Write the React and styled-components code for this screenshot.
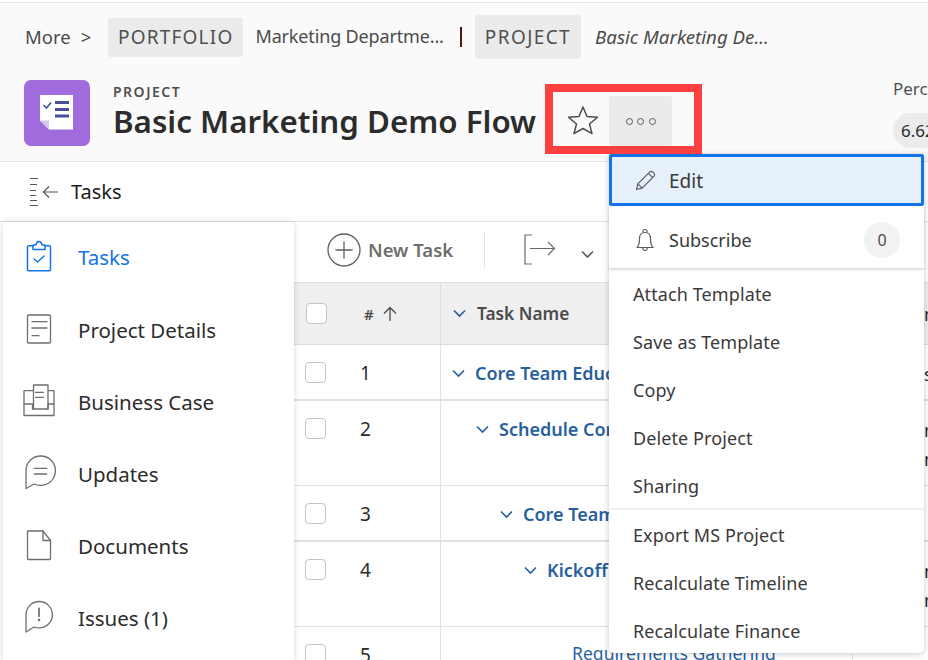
import styled, { createGlobalStyle } from "styled-components";

const menuGroup = ["Attach Template", "Save as Template", "Copy", "Delete Project", "Sharing"];
const menuGroup2 = ["Export MS Project", "Recalculate Timeline", "Recalculate Finance"];

const rows = [
  { n: 1, h: 56, level: 0, name: "Core Team Education", thick: true, right: "s" },
  { n: 2, h: 85, level: 1, name: "Schedule Core Team", right: "two" },
  { n: 3, h: 56, level: 2, name: "Core Team Training", thick: true },
  { n: 4, h: 85, level: 3, name: "Kickoff Meeting", right: "two" },
];

const Global = createGlobalStyle`
  html, body { margin: 0; padding: 0; background: #fff; }
  body { font-family: "Noto Sans", "Open Sans", sans-serif; color: #2c2c2c; }
`;

function NavSvg({ color = "#6e6e6e", sw = 1.3, children }) {
  return (
    <svg width="32" height="32" viewBox="0 0 32 32" fill="none" stroke={color} strokeWidth={sw} strokeLinecap="round" strokeLinejoin="round" style={{ overflow: "visible" }}>
      {children}
    </svg>
  );
}

function Chevron({ color = "#2a5f9e" }) {
  return (
    <svg width="13" height="9" viewBox="0 0 13 9" fill="none" stroke={color} strokeWidth="1.7">
      <path d="M1 1.5 L6.5 7 L12 1.5" />
    </svg>
  );
}

export default function App() {
  return (
    <Page>
      <Global />
      <Header>
        <Crumbs>
          <More>More<MoreArrow>&gt;</MoreArrow></More>
          <Tag>PORTFOLIO</Tag>
          <CrumbText>Marketing Departme...</CrumbText>
          <CrumbSep />
          <Tag $big>PROJECT</Tag>
          <CrumbText $italic>Basic Marketing De...</CrumbText>
        </Crumbs>
        <TitleRow>
          <Logo>
            <svg width="34" height="36" viewBox="0 0 34 36">
              <path d="M0 0 H33 V34.5 H9 L0 25.5 Z" fill="#fff" />
              <path d="M0 25.5 H9 V34.5 Z" fill="#d9c6ee" />
              <path d="M3.5 10 L6.5 13 L11 7.5" fill="none" stroke="#4a4f9c" strokeWidth="1.6" />
              <path d="M15 7.5 H29 M15 14.5 H29 M15 21 H29" stroke="#4a4f9c" strokeWidth="2.8" />
            </svg>
          </Logo>
          <TitleBlock>
            <Kicker>PROJECT</Kicker>
            <Title>Basic Marketing Demo Flow</Title>
          </TitleBlock>
          <StarWrap>
            <svg width="32" height="30" viewBox="0 0 32 30" fill="none" stroke="#4b4b4b" strokeWidth="1.5" strokeLinejoin="round">
              <path d="M16 2 L20 11.5 L30.5 12.3 L22.5 19 L25 28.6 L16 23.5 L7 28.6 L9.5 19 L1.5 12.3 L12 11.5 Z" />
            </svg>
          </StarWrap>
          <DotsButton>
            <Dot /><Dot /><Dot />
          </DotsButton>
          <Percent>
            <PercentLabel>Percent Complete</PercentLabel>
            <PercentPill>6.62%</PercentPill>
          </Percent>
        </TitleRow>
      </Header>

      <TasksBar>
        <svg width="30" height="30" viewBox="0 0 30 30" fill="none" stroke="#55555f" strokeWidth="1.2">
          <path d="M0 1.5 H8 M0 7.5 H7 M0 13.5 H6 M0 18.5 H6 M0 23.5 H7 M0 28.5 H8" strokeWidth="1.1" />
          <path d="M28 15 H13.5 M19 9.5 L13.5 15 L19 20.5" />
        </svg>
        <TasksBarLabel>Tasks</TasksBarLabel>
      </TasksBar>

      <Main>
        <Sidebar>
          <NavItem $active>
            <NavIcon>
              <NavSvg color="#1473e6" sw={1.5}>
                <path d="M10 4.7 H5.5 Q4.5 4.7 4.5 5.7 V28.7 Q4.5 29.7 5.5 29.7 H26.5 Q27.5 29.7 27.5 28.7 V5.7 Q27.5 4.7 26.5 4.7 H22" />
                <path d="M10 8.5 V4 H13 Q13.5 0.5 16 0.5 Q18.5 0.5 19 4 H22 V8.5 Z" />
                <path d="M11 18 L14.5 21 L21 15" />
              </NavSvg>
            </NavIcon>
            <NavLabel $active>Tasks</NavLabel>
          </NavItem>
          <NavItem>
            <NavIcon>
              <NavSvg>
                <rect x="4.5" y="1" width="23" height="28" rx="1.2" />
                <path d="M9 7.7 H24 M9 14 H24 M9 21.7 H16" />
              </NavSvg>
            </NavIcon>
            <NavLabel>Project Details</NavLabel>
          </NavItem>
          <NavItem>
            <NavIcon>
              <NavSvg>
                <path d="M10 4.7 H1 V29.5 H31 V4.7 H25.5" />
                <path d="M1 18 H9.5 V23 H25 V18 H31" />
                <path d="M10.5 23 V-1 H25 V23" />
                <path d="M12.5 6.3 H20.5 M12.5 11.3 H20.5" />
              </NavSvg>
            </NavIcon>
            <NavLabel>Business Case</NavLabel>
          </NavItem>
          <NavItem>
            <NavIcon>
              <NavSvg>
                <path d="M3 30.5 V12.7 A14.7 14.7 0 1 1 17.7 27.4 Q14 27.4 11 26 Z" />
                <path d="M11.3 10.3 H23.7 M11.3 16 H23.7" />
              </NavSvg>
            </NavIcon>
            <NavLabel>Updates</NavLabel>
          </NavItem>
          <NavItem>
            <NavIcon>
              <NavSvg>
                <path d="M4.5 1 H20 L27.5 10.5 V28.5 Q27.5 29.5 26.5 29.5 H5.5 Q4.5 29.5 4.5 28.5 Z" />
                <path d="M20 1 V10.5 H27.5" />
              </NavSvg>
            </NavIcon>
            <NavLabel>Documents</NavLabel>
          </NavItem>
          <NavItem>
            <NavIcon>
              <NavSvg>
                <path d="M3 30 V12.7 A13.2 13.2 0 1 1 16.2 25.9 Q13 25.9 11 25 Z" />
                <path d="M16 6.3 V14.3" strokeWidth="1.7" />
                <circle cx="16" cy="18" r="0.7" fill="#6e6e6e" />
              </NavSvg>
            </NavIcon>
            <NavLabel>Issues (1)</NavLabel>
          </NavItem>
        </Sidebar>

        <Content>
          <Toolbar>
            <svg width="34" height="34" viewBox="0 0 34 34" fill="none" stroke="#5f5f5f" strokeWidth="1.3">
              <circle cx="17" cy="17" r="16" />
              <path d="M17 8.5 V25.5 M8.5 17 H25.5" />
            </svg>
            <NewTask>New Task</NewTask>
            <ToolDivider />
            <svg width="32" height="32" viewBox="0 0 32 32" fill="none" stroke="#6a6a6a" strokeWidth="1.2">
              <path d="M8 1 H1 V30 H8" />
              <path d="M6 14.5 H30 M24 8 L30.5 14.5 L24 21" />
            </svg>
            <ToolChevron>
              <Chevron color="#5f5f5f" />
            </ToolChevron>
          </Toolbar>
          <TableHead>
            <HeadCheckCell><Check /></HeadCheckCell>
            <NumHead>
              #
              <svg width="14" height="16" viewBox="0 0 14 16" fill="none" stroke="#4b4b4b" strokeWidth="1.3">
                <path d="M7 15 V1.5 M1 7.5 L7 1.5 L13 7.5" />
              </svg>
            </NumHead>
            <NameHead>
              <Chevron />
              <NameHeadText>Task Name</NameHeadText>
            </NameHead>
            <RightHead>m</RightHead>
          </TableHead>
          {rows.map((r) => (
            <Row key={r.n} $h={r.h} $thick={r.thick}>
              <CheckCell><Check /></CheckCell>
              <NumCell>{r.n}</NumCell>
              <NameCell $level={r.level}>
                <Chevron />
                <TaskLink>{r.name}</TaskLink>
              </NameCell>
              <RightCell>{r.right === "two" ? <>m<br />m</> : r.right}</RightCell>
            </Row>
          ))}
          <Row $h={40}>
            <CheckCell><Check /></CheckCell>
            <NumCell>5</NumCell>
            <LastName>Requirements Gathering</LastName>
            <RightCell />
          </Row>
        </Content>
      </Main>

      <Menu>
        <EditItem>
          <svg width="21" height="21" viewBox="0 0 22 22" fill="none" stroke="#5a5a5a" strokeWidth="1.2" strokeLinejoin="round">
            <path d="M1.5 20.5 L3 14.5 L15.5 2 Q17 1 18.5 2 L20 3.5 Q21 5 20 6.5 L7.5 19 Z M3 14.5 L7.5 19 M14 3.5 L18.5 8" />
          </svg>
          <span>Edit</span>
        </EditItem>
        <SubscribeItem>
          <svg width="18" height="24" viewBox="0 0 18 24" fill="none" stroke="#5a5a5a" strokeWidth="1.2" strokeLinejoin="round">
            <path d="M1 19.5 C3.5 17 3.5 14 3.5 10.5 C3.5 7 5.5 4.5 9 4.5 C12.5 4.5 14.5 7 14.5 10.5 C14.5 14 14.5 17 17 19.5 Z" />
            <path d="M7 4.5 V3 Q7 1.5 9 1.5 Q11 1.5 11 3 V4.5 M6.5 19.5 Q7 22.5 9 22.5 Q11 22.5 11.5 19.5" />
          </svg>
          <SubscribeLabel>Subscribe</SubscribeLabel>
          <Count>0</Count>
        </SubscribeItem>
        <MenuList>
          {menuGroup.map((m) => <MenuItem key={m}>{m}</MenuItem>)}
          <MenuRule />
          {menuGroup2.map((m) => <MenuItem key={m}>{m}</MenuItem>)}
        </MenuList>
      </Menu>

      <Highlight />
    </Page>
  );
}

const Page = styled.div`
  position: relative;
  width: 928px;
  height: 660px;
  overflow: hidden;
  background: #fff;
`;

const Header = styled.header`
  height: 158px;
  margin-top: 2px;
  background: #fafafa;
  border-top: 1px solid #e3e3e3;
  border-bottom: 1px solid #e3e3e3;
`;

const Crumbs = styled.div`
  display: flex;
  align-items: center;
  height: 44px;
  padding: 12px 0 0 25px;
  font-size: 18.5px;
  color: #4b4b4b;
  white-space: nowrap;
`;

const More = styled.span`
  display: flex;
  width: 83px;
  margin-top: -2px;
`;

const MoreArrow = styled.span`
  margin-left: 10px;
`;

const Tag = styled.span`
  display: flex;
  align-items: center;
  height: ${(p) => (p.$big ? "44px" : "39px")};
  padding: 0 10px;
  border-radius: 3px;
  background: #ebebeb;
  font-size: 19px;
  letter-spacing: ${(p) => (p.$big ? "1.4px" : "1.2px")};
  color: #505050;
`;

const CrumbText = styled.span`
  margin: -2px 0 0 ${(p) => (p.$italic ? "14px" : "12px")};
  font-size: ${(p) => (p.$italic ? "18.7px" : "18px")};
  font-style: ${(p) => (p.$italic ? "italic" : "normal")};
  letter-spacing: ${(p) => (p.$italic ? "0" : "-0.15px")};
  color: #4b4b4b;
`;

const CrumbSep = styled.span`
  flex: none;
  width: 2px;
  height: 20px;
  margin: 0 13px 0 16px;
  background: #5a1414;
`;

const TitleRow = styled.div`
  display: flex;
  align-items: center;
  padding: 21px 0 0 24px;
`;

const Logo = styled.div`
  display: flex;
  align-items: center;
  justify-content: center;
  flex: none;
  width: 66px;
  height: 66px;
  border-radius: 7px;
  background: #a06bdc;
`;

const TitleBlock = styled.div`
  flex: none;
  width: 431px;
  margin: -2px 0 0 23px;
  white-space: nowrap;
`;

const Kicker = styled.div`
  margin-bottom: 2px;
  font-size: 14px;
  line-height: 15px;
  font-weight: 600;
  letter-spacing: 1.5px;
  color: #505050;
`;

const Title = styled.div`
  font-size: 31.3px;
  line-height: 40px;
  font-weight: 600;
  color: #2c2c2c;
`;

const StarWrap = styled.div`
  display: flex;
  align-self: flex-end;
  flex: none;
  width: 42px;
  margin: 0 0 11px 23px;
`;

const DotsButton = styled.div`
  display: flex;
  align-items: center;
  justify-content: center;
  align-self: flex-end;
  gap: 4.5px;
  flex: none;
  width: 63px;
  height: 50px;
  border-radius: 3px;
  background: #ebebeb;
`;

const Dot = styled.span`
  width: 7px;
  height: 7px;
  border: 1.3px solid #5a5a5a;
  border-radius: 50%;
  box-sizing: border-box;
`;

const Percent = styled.div`
  align-self: flex-start;
  flex: none;
  height: 66px;
  margin: -1px 0 0 221px;
  white-space: nowrap;
`;

const PercentLabel = styled.div`
  font-size: 17px;
  line-height: 20px;
  color: #505050;
`;

const PercentPill = styled.div`
  display: flex;
  align-items: center;
  box-sizing: border-box;
  width: 80px;
  height: 35px;
  margin-top: 14px;
  padding-left: 8px;
  border-radius: 18px;
  background: #ebebeb;
  font-size: 17px;
  color: #2c2c2c;
`;

const TasksBar = styled.div`
  display: flex;
  align-items: center;
  gap: 11px;
  height: 59px;
  padding-left: 30px;
  border-bottom: 1px solid #e3e3e3;
`;

const TasksBarLabel = styled.span`
  font-size: 20px;
  color: #1c1c1c;
`;

const Main = styled.div`
  display: flex;
`;

const Sidebar = styled.nav`
  position: relative;
  z-index: 2;
  flex: none;
  box-sizing: border-box;
  width: 291px;
  height: 440px;
  margin-left: 3px;
  background: #fff;
  box-shadow: 0 0 6px rgba(0, 0, 0, 0.16);
`;

const NavItem = styled.div`
  display: flex;
  align-items: center;
  box-sizing: border-box;
  height: 72px;
  padding: 0 0 ${(p) => (p.$active ? "2px" : "0")} 20px;
`;

const NavIcon = styled.div`
  display: flex;
  align-items: center;
  flex: none;
  width: 55px;
`;

const NavLabel = styled.span`
  font-size: 20.5px;
  color: ${(p) => (p.$active ? "#1473e6" : "#2c2c2c")};
`;

const Content = styled.div`
  flex: 1;
  min-width: 0;
`;

const Toolbar = styled.div`
  display: flex;
  align-items: center;
  box-sizing: border-box;
  height: 60px;
  padding: 0 0 5px 33px;
`;

const NewTask = styled.span`
  margin-left: 7px;
  font-size: 18.5px;
  font-weight: 600;
  color: #6e6e6e;
`;

const ToolDivider = styled.span`
  flex: none;
  width: 1px;
  height: 36px;
  margin: 0 39px 0 31px;
  background: #e3e3e3;
`;

const ToolChevron = styled.span`
  display: flex;
  margin: 10px 0 0 25px;
`;

const TableHead = styled.div`
  display: flex;
  height: 61px;
  background: #efefef;
  border-top: 1px solid #e0e0e0;
  border-bottom: 1px solid #dcdcdc;
`;

const Row = styled.div`
  display: flex;
  box-sizing: border-box;
  height: ${(p) => p.$h}px;
  border-bottom: ${(p) => (p.$thick ? "2px" : "1px")} solid #e1e1e1;
`;

const CheckCell = styled.div`
  flex: none;
  box-sizing: border-box;
  width: 58px;
  padding: 17px 0 0 11px;
`;

const HeadCheckCell = styled(CheckCell)`
  display: flex;
  align-items: center;
  padding: 0 0 0 12px;
`;

const Check = styled.span`
  display: block;
  box-sizing: border-box;
  width: 21px;
  height: 21px;
  border: 1px solid #c4c4c4;
  border-radius: 4px;
  background: #fff;
`;

const NumHead = styled.div`
  display: flex;
  align-items: center;
  gap: 9px;
  flex: none;
  box-sizing: border-box;
  width: 89px;
  padding-left: 12px;
  border-right: 1px solid #dcdcdc;
  font-size: 15px;
  font-weight: 600;
  color: #4b4b4b;
`;

const NameHead = styled.div`
  display: flex;
  align-items: center;
  gap: 11px;
  flex: none;
  box-sizing: border-box;
  width: 412px;
  padding-left: 12px;
  border-right: 1px solid #dcdcdc;
`;

const NameHeadText = styled.span`
  font-size: 17.3px;
  font-weight: 600;
  color: #4b4b4b;
`;

const RightHead = styled.div`
  display: flex;
  align-items: center;
  flex: 1;
  padding-left: 71px;
  font-size: 18px;
  color: #2c2c2c;
`;

const NumCell = styled.div`
  flex: none;
  box-sizing: border-box;
  width: 89px;
  padding: 16px 0 0 8px;
  border-right: 1px solid #e1e1e1;
  font-size: 19px;
  line-height: 24px;
  color: #2c2c2c;
`;

const NameCell = styled.div`
  display: flex;
  align-items: flex-start;
  gap: 10px;
  flex: none;
  box-sizing: border-box;
  width: 412px;
  padding: 16px 0 0 ${(p) => 11 + p.$level * 24}px;
  border-right: 1px solid #e1e1e1;
  white-space: nowrap;
  overflow: hidden;
  & > svg { margin-top: 8px; }
`;

const LastName = styled.div`
  flex: none;
  box-sizing: border-box;
  width: 412px;
  padding: 14px 0 0 131px;
  border-right: 1px solid #e1e1e1;
  white-space: nowrap;
  font-size: 17.6px;
  line-height: 24px;
  color: #2a5f9e;
`;

const TaskLink = styled.span`
  font-size: 18px;
  line-height: 24px;
  font-weight: 600;
  color: #2a5f9e;
`;

const RightCell = styled.div`
  flex: 1;
  padding: 15px 0 0 71px;
  font-size: 18px;
  line-height: 29px;
  color: #2c2c2c;
`;

const Menu = styled.div`
  position: absolute;
  z-index: 5;
  left: 609px;
  top: 154px;
  width: 315px;
  height: 499px;
  border-radius: 0 0 5px 5px;
  background: #fff;
  box-shadow: 0 1px 6px rgba(0, 0, 0, 0.22);
  font-size: 18px;
  color: #3a3a3a;
`;

const EditItem = styled.div`
  display: flex;
  align-items: center;
  gap: 13px;
  box-sizing: border-box;
  height: 52px;
  padding: 1px 0 0 23px;
  background: #e5f0fb;
  border: 3px solid #1473e6;
  border-radius: 2px;
  font-size: 19px;
`;

const SubscribeItem = styled.div`
  display: flex;
  align-items: center;
  box-sizing: border-box;
  height: 61px;
  margin-top: 1px;
  padding: 4px 24px 0 27px;
  box-shadow: 0 2px 2px rgba(60, 80, 110, 0.2);
`;

const SubscribeLabel = styled.span`
  margin-left: 15px;
  flex: 1;
  font-size: 18px;
`;

const Count = styled.span`
  display: flex;
  align-items: center;
  justify-content: center;
  width: 36px;
  height: 36px;
  border-radius: 50%;
  background: #f2f2f2;
  font-size: 16px;
  color: #4b4b4b;
`;

const MenuList = styled.div`
  padding-top: 2px;
`;

const MenuItem = styled.div`
  display: flex;
  align-items: center;
  height: 48px;
  padding-left: 24px;
  letter-spacing: 0.1px;
`;

const MenuRule = styled.div`
  height: 2px;
  margin: -2px 0 1px;
  background: #f0f0f0;
`;

const Highlight = styled.div`
  position: absolute;
  z-index: 6;
  left: 545px;
  top: 84px;
  box-sizing: border-box;
  width: 157px;
  height: 70px;
  border: 8px solid #ff4040;
`;
